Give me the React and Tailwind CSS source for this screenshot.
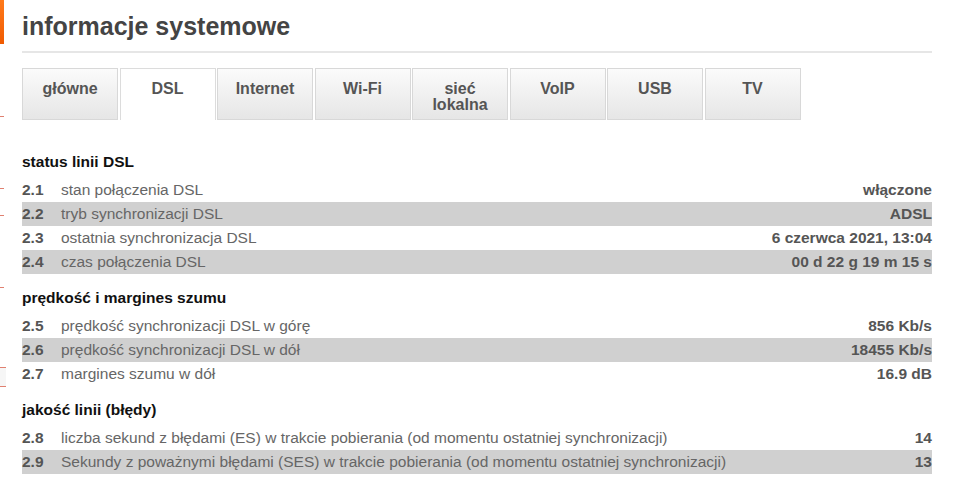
import React from 'react';

const tabs = [
    { label: 'główne' },
    { label: 'DSL', active: true },
    { label: 'Internet' },
    { label: 'Wi-Fi' },
    { label: 'sieć lokalna', twoLine: true },
    { label: 'VoIP' },
    { label: 'USB' },
    { label: 'TV' },
];

const sections = [
    {
        title: 'status linii DSL',
        rows: [
            ['2.1', 'stan połączenia DSL', 'włączone'],
            ['2.2', 'tryb synchronizacji DSL', 'ADSL'],
            ['2.3', 'ostatnia synchronizacja DSL', '6 czerwca 2021, 13:04'],
            ['2.4', 'czas połączenia DSL', '00 d 22 g 19 m 15 s'],
        ],
    },
    {
        title: 'prędkość i margines szumu',
        rows: [
            ['2.5', 'prędkość synchronizacji DSL w górę', '856 Kb/s'],
            ['2.6', 'prędkość synchronizacji DSL w dół', '18455 Kb/s'],
            ['2.7', 'margines szumu w dół', '16.9 dB'],
        ],
    },
    {
        title: 'jakość linii (błędy)',
        rows: [
            ['2.8', 'liczba sekund z błędami (ES) w trakcie pobierania (od momentu ostatniej synchronizacji)', '14'],
            ['2.9', 'Sekundy z poważnymi błędami (SES) w trakcie pobierania (od momentu ostatniej synchronizacji)', '13'],
        ],
    },
];

function Tab({ tab }) {
    const base = 'w-[96px] h-[52px] flex justify-center text-center text-[16px] leading-[16px] font-bold text-[#555] border';
    return (
        <div
            className={
                tab.active
                    ? `${base} bg-white border-[#dcdcdc] border-b-0 pt-[12px]`
                    : `${base} bg-gradient-to-b from-[#fbfbfb] to-[#e6e6e6] border-[#d8d8d8] pt-[12px]`
            }
        >
            <span>
                {tab.twoLine ? (
                    <>sieć<br />lokalna</>
                ) : tab.label}
            </span>
        </div>
    );
}

function Section({ section, first }) {
    return (
        <div className={first ? 'mt-[30px]' : 'mt-[12px]'}>
            <div className="h-[24px] leading-[24px] text-[15.5px] font-bold text-[#111] mb-[4px]">
                {section.title}
            </div>
            {section.rows.map(([num, label, value], i) => (
                <div
                    key={num}
                    className={`h-[24px] flex items-center text-[15.5px] ${i % 2 === 1 ? 'bg-[#d0d0d0]' : ''}`}
                >
                    <span className="w-[39px] font-bold text-[#555]">{num}</span>
                    <span className="flex-1 text-[#666]">{label}</span>
                    <span className="font-bold text-[#555]">{value}</span>
                </div>
            ))}
        </div>
    );
}

export default function App() {
    return (
        <div className="w-[957px] h-[486px] bg-white flex overflow-hidden font-['Liberation_Sans',Arial,sans-serif]">
            {/* left edge of the sidebar */}
            <div className="w-[22px] flex flex-col shrink-0">
                <div className="w-[4px] h-[44px] bg-gradient-to-b from-[#ff7a1a] to-[#f05a00]" />
                <div className="mt-[72px] w-[4px] h-px bg-[#e08070]" />
                <div className="mt-[71px] w-[4px] h-px bg-[#e08070]" />
                <div className="mt-[26px] w-[4px] h-px bg-[#e08070]" />
                <div className="mt-[71px] w-[4px] h-px bg-[#e08070]" />
                <div className="mt-[79px] w-[6px] h-[20px] border-y border-[#e08070] bg-[#f6f6f6]" />
            </div>

            <div className="flex-1 pr-[25px]">
                <div className="pt-[10px] h-[51px] text-[25px] leading-[32px] font-bold text-[#444]">
                    informacje systemowe
                </div>
                <div className="h-[2px] bg-[#e6e6e6]" />

                <div className="mt-[15px] flex gap-[1.5px] items-start">
                    {tabs.map((tab) => (
                        <Tab key={tab.label} tab={tab} />
                    ))}
                </div>

                {sections.map((s, i) => (
                    <Section key={s.title} section={s} first={i === 0} />
                ))}
            </div>
        </div>
    );
}
